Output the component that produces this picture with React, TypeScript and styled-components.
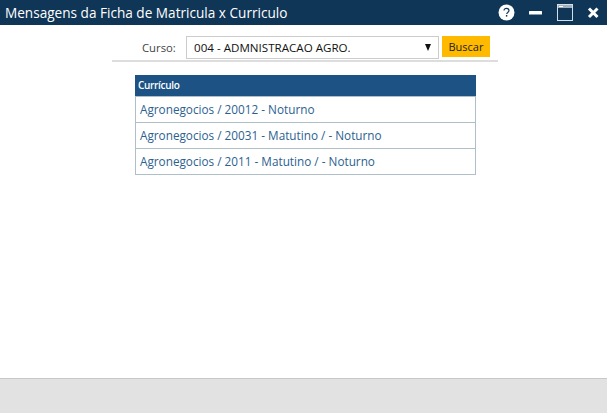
import { createGlobalStyle } from 'styled-components'
import styled from 'styled-components'

const GlobalStyle = createGlobalStyle`
  html, body { margin: 0; padding: 0; height: 100%; background: #fff; }
  #root { height: 100%; }
  body { font-family: "Open Sans", "Noto Sans", sans-serif; }
`

const Page = styled.div`
  display: flex;
  flex-direction: column;
  height: 413px;
  width: 607px;
  overflow: hidden;
`

const TitleBar = styled.header`
  display: flex;
  align-items: center;
  height: 25px;
  background: #0f3557;
  padding: 0 8px 0 5px;
`

const Title = styled.h1`
  flex: 1;
  margin: 0;
  font-size: 13.6px;
  font-weight: 400;
  color: #fff;
  white-space: nowrap;
`

const WindowButtons = styled.div`
  display: flex;
  align-items: center;
  gap: 14px;
`

const Content = styled.main`
  flex: 1;
  padding: 11px 0 0 112px;
`

const SearchRow = styled.form`
  display: flex;
  align-items: flex-start;
  box-sizing: border-box;
  width: 386px;
  height: 26px;
  margin: 0;
  padding-left: 30px;
  border-bottom: 2px solid #dddddd;
`

const Label = styled.label`
  width: 44px;
  font-size: 11.3px;
  line-height: 23px;
  color: #444;
`

const SelectBox = styled.div`
  display: flex;
  align-items: center;
  justify-content: space-between;
  box-sizing: border-box;
  width: 253px;
  height: 23px;
  padding: 0 7px;
  border: 1px solid #cccccc;
  font-size: 11.6px;
  color: #111;
`

const Arrow = styled.span`
  width: 0;
  height: 0;
  border-left: 3.5px solid transparent;
  border-right: 3.5px solid transparent;
  border-top: 7px solid #111;
`

const SearchButton = styled.button`
  width: 48px;
  height: 21px;
  margin-left: 3px;
  padding: 0;
  border: 0;
  background: #ffba00;
  font-family: inherit;
  font-size: 11px;
  color: #222;
`

const Table = styled.section`
  box-sizing: border-box;
  width: 341px;
  margin: 13px 0 0 23px;
  border: 1px solid #aebfc8;
  border-top: 0;
`

const TableHead = styled.div`
  height: 21px;
  margin: 0 -1px;
  padding-left: 3px;
  background: #1c5284;
  font-size: 10px;
  font-weight: 600;
  line-height: 21px;
  letter-spacing: -0.3px;
  color: #fff;
`

const TableRow = styled.div`
  box-sizing: border-box;
  height: 26px;
  padding-left: 4px;
  border-top: 1px solid #aebfc8;
  font-size: 11.75px;
  line-height: 25px;
  color: #2c5f90;
  white-space: nowrap;
`

const Footer = styled.footer`
  box-sizing: border-box;
  height: 35px;
  background: #e2e2e2;
  border-top: 1px solid #c8c8c8;
`

const rows = [
  'Agronegocios / 20012 - Noturno',
  'Agronegocios / 20031 - Matutino / - Noturno',
  'Agronegocios / 2011 - Matutino / - Noturno',
]

function HelpIcon() {
  return (
    <svg width="17" height="17" viewBox="0 0 17 17">
      <circle cx="8.5" cy="8.5" r="8" fill="#fff" />
      <path d="M6 6.6c0-1.5 1.1-2.3 2.5-2.3s2.5.8 2.5 2.1c0 1-.6 1.5-1.3 2-.6.4-.9.7-.9 1.5" fill="none" stroke="#0f3557" strokeWidth="1.2" />
      <rect x="7.9" y="11" width="1.4" height="1.6" fill="#0f3557" />
    </svg>
  )
}

function MinimizeIcon() {
  return (
    <svg width="14" height="17" viewBox="0 0 14 17">
      <rect x="0" y="7" width="13" height="3.4" rx="0.5" fill="#fff" />
    </svg>
  )
}

function MaximizeIcon() {
  return (
    <svg width="16" height="17" viewBox="0 0 16 17">
      <rect x="0.5" y="0.5" width="15" height="16" fill="none" stroke="#d5dde5" />
      <rect x="1" y="1" width="14" height="3" fill="#9fb0c0" />
      <rect x="2" y="2" width="4" height="1" fill="#fff" />
    </svg>
  )
}

function CloseIcon() {
  return (
    <svg width="12" height="17" viewBox="0 0 12 17">
      <path d="M2 4.5l8.5 8.5M10.5 4.5L2 13" stroke="#fff" strokeWidth="3" />
    </svg>
  )
}

export default function App() {
  return (
    <Page>
      <GlobalStyle />
      <TitleBar>
        <Title>Mensagens da Ficha de Matricula x Curriculo</Title>
        <WindowButtons>
          <HelpIcon />
          <MinimizeIcon />
          <MaximizeIcon />
          <CloseIcon />
        </WindowButtons>
      </TitleBar>
      <Content>
        <SearchRow>
          <Label>Curso:</Label>
          <SelectBox>
            004 - ADMNISTRACAO AGRO.
            <Arrow />
          </SelectBox>
          <SearchButton type="button">Buscar</SearchButton>
        </SearchRow>
        <Table>
          <TableHead>Currículo</TableHead>
          {rows.map((row) => (
            <TableRow key={row}>{row}</TableRow>
          ))}
        </Table>
      </Content>
      <Footer />
    </Page>
  )
}
